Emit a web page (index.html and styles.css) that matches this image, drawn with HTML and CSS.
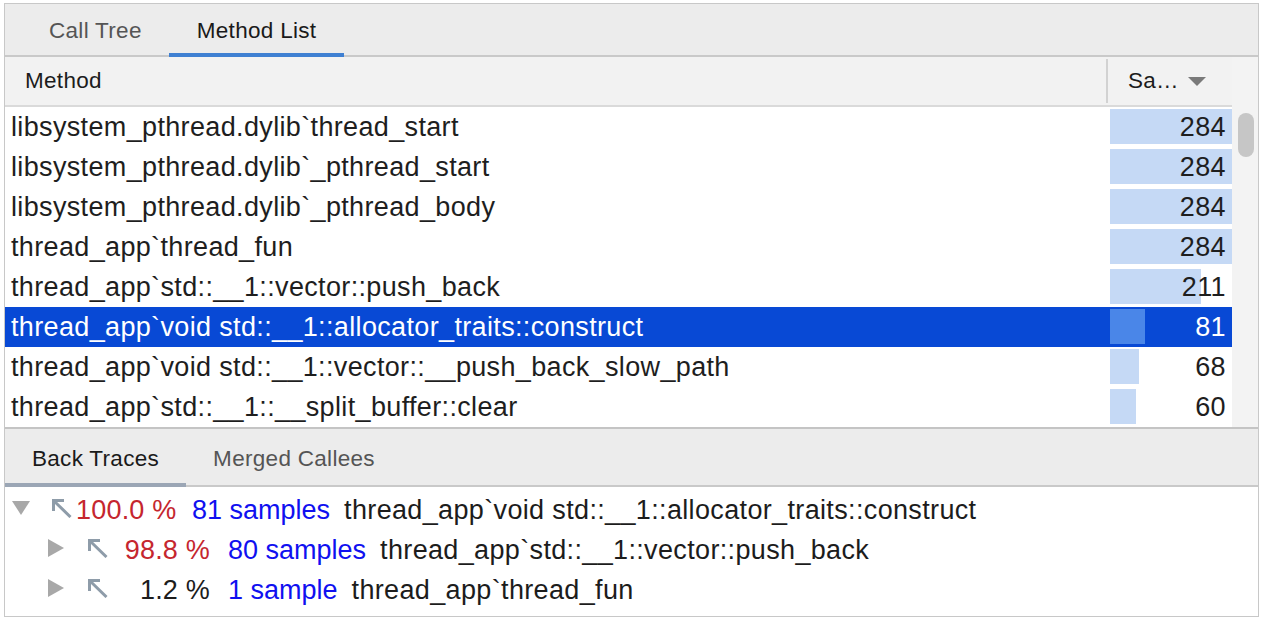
FILE: index.html
```html
<!DOCTYPE html>
<html>
<head>
<meta charset="utf-8">
<title>Method List</title>
<link rel="stylesheet" href="styles.css">
</head>
<body>
<div class="panel">
  <div class="tabs top-tabs">
    <div class="tab">Call Tree</div>
    <div class="tab active">Method List</div>
  </div>
  <div class="main">
    <div class="table">
      <div class="thead">
        <div class="h-method">Method</div>
        <div class="h-div"></div>
        <div class="h-samples"><span>Sa…</span>
          <svg class="sort" width="18" height="9" viewBox="0 0 18 9"><polygon points="0,0 18,0 9,9" fill="#7a7a7a"/></svg>
        </div>
      </div>
      <div class="rows">
        <div class="row"><div class="name">libsystem_pthread.dylib`thread_start</div><div class="cnt"><div class="bar" style="width:100%"></div><span class="num">284</span></div></div>
        <div class="row"><div class="name">libsystem_pthread.dylib`_pthread_start</div><div class="cnt"><div class="bar" style="width:100%"></div><span class="num">284</span></div></div>
        <div class="row"><div class="name">libsystem_pthread.dylib`_pthread_body</div><div class="cnt"><div class="bar" style="width:100%"></div><span class="num">284</span></div></div>
        <div class="row"><div class="name">thread_app`thread_fun</div><div class="cnt"><div class="bar" style="width:100%"></div><span class="num">284</span></div></div>
        <div class="row"><div class="name">thread_app`std::__1::vector::push_back</div><div class="cnt"><div class="bar" style="width:74.3%"></div><span class="num">211</span></div></div>
        <div class="row selected"><div class="name">thread_app`void std::__1::allocator_traits::construct</div><div class="cnt"><div class="bar" style="width:28.5%"></div><span class="num">81</span></div></div>
        <div class="row"><div class="name">thread_app`void std::__1::vector::__push_back_slow_path</div><div class="cnt"><div class="bar" style="width:23.9%"></div><span class="num">68</span></div></div>
        <div class="row"><div class="name">thread_app`std::__1::__split_buffer::clear</div><div class="cnt"><div class="bar" style="width:21.1%"></div><span class="num">60</span></div></div>
      </div>
    </div>
    <div class="scroll"><div class="thumb"></div></div>
  </div>
  <div class="tabs bottom-tabs">
    <div class="tab active">Back Traces</div>
    <div class="tab">Merged Callees</div>
  </div>
  <div class="tree">
    <div class="tr lvl0">
      <div class="toggle"><svg width="18" height="14" viewBox="0 0 18 14"><polygon points="0,0 18,0 9,14" fill="#a8a8a8"/></svg></div>
      <div class="icon"><svg width="20" height="19" viewBox="0 0 20 19"><path d="M1.5 12 V1.5 H12 M1.5 1.5 L18.5 18" fill="none" stroke="#8e9ca9" stroke-width="3"/></svg></div>
      <div class="pct red">100.0 %</div>
      <div class="smp">81 samples</div>
      <div class="mth">thread_app`void std::__1::allocator_traits::construct</div>
    </div>
    <div class="tr lvl1">
      <div class="toggle"><svg width="16" height="18" viewBox="0 0 16 18"><polygon points="0,0 16,9 0,18" fill="#a8a8a8"/></svg></div>
      <div class="icon"><svg width="20" height="19" viewBox="0 0 20 19"><path d="M1.5 12 V1.5 H12 M1.5 1.5 L18.5 18" fill="none" stroke="#8e9ca9" stroke-width="3"/></svg></div>
      <div class="pct red">98.8 %</div>
      <div class="smp">80 samples</div>
      <div class="mth">thread_app`std::__1::vector::push_back</div>
    </div>
    <div class="tr lvl1">
      <div class="toggle"><svg width="16" height="18" viewBox="0 0 16 18"><polygon points="0,0 16,9 0,18" fill="#a8a8a8"/></svg></div>
      <div class="icon"><svg width="20" height="19" viewBox="0 0 20 19"><path d="M1.5 12 V1.5 H12 M1.5 1.5 L18.5 18" fill="none" stroke="#8e9ca9" stroke-width="3"/></svg></div>
      <div class="pct">1.2 %</div>
      <div class="smp">1 sample</div>
      <div class="mth">thread_app`thread_fun</div>
    </div>
  </div>
</div>
</body>
</html>
```

FILE: styles.css
```css
* { box-sizing: border-box; }
html, body { margin: 0; padding: 0; background: #ffffff; }
body {
  font-family: "Liberation Sans", Arial, sans-serif;
  color: #1c1c1c;
}
.panel {
  margin: 3px 0 0 4px;
  width: 1255px;
  height: 614px;
  border: 1px solid #c8c8c8;
  display: flex;
  flex-direction: column;
  overflow: hidden;
}
.tabs {
  display: flex;
  background: #ececec;
  border-bottom: 2px solid #c9c9c9;
  font-size: 22.5px;
  letter-spacing: 0.3px;
}
.top-tabs { height: 53px; padding-left: 17px; }
.bottom-tabs { height: 58px; }
.tab {
  display: flex;
  align-items: center;
  padding: 0 27px;
  color: #555555;
  margin-bottom: -2px;
  border-bottom: 4px solid transparent;
}
.top-tabs .tab { padding-top: 4px; }
.top-tabs .tab.active { padding: 4px 28px 0 28px; }
.bottom-tabs .tab { padding: 6px 27px 0 27px; }
.tab.active { color: #1a1a1a; }
.top-tabs .tab.active { border-bottom-color: #3f80d2; }
.bottom-tabs .tab.active { border-bottom-color: #9ba6b5; }

.main {
  display: flex;
  height: 372px;
  border-bottom: 2px solid #c4c4c4;
}
.table {
  flex: 1;
  display: flex;
  flex-direction: column;
}
.thead {
  height: 50px;
  display: flex;
  background: #f2f2f2;
  border-bottom: 2px solid #dadada;
  font-size: 22.5px;
  letter-spacing: 0.3px;
}
.h-method {
  flex: 1;
  display: flex;
  align-items: center;
  padding-left: 20px;
}
.h-div {
  width: 2px;
  margin: 2px 0;
  background: #d2d2d2;
}
.h-samples {
  width: 124px;
  display: flex;
  align-items: center;
  padding-left: 20px;
}
.sort { margin-left: auto; margin-right: 26px; margin-top: 1px; }
.rows { height: 320px; }
.row {
  height: 40px;
  display: flex;
  font-size: 27px;
  letter-spacing: 0.35px;
  line-height: 41px;
  color: #1e1e1e;
}
.name {
  flex: 1;
  padding-left: 6px;
  white-space: nowrap;
  overflow: hidden;
}
.cnt {
  width: 122px;
  position: relative;
  text-align: right;
  padding-right: 6px;
  letter-spacing: 0.4px;
}
.bar {
  position: absolute;
  left: 0;
  top: 2px;
  height: 35px;
  background: #c5d9f5;
}
.num { position: relative; }
.row.selected { background: #0849d5; color: #ffffff; }
.row.selected .bar { background: #4a86e8; }

.scroll {
  width: 26px;
  background: #f3f3f3;
  padding: 56px 0 0 6px;
}
.thumb {
  width: 16px;
  height: 44px;
  border-radius: 8px;
  background: #c6c6c6;
}

.tree {
  flex: 1;
  padding-top: 3px;
  font-size: 27px;
  letter-spacing: 0.35px;
}
.tr {
  height: 40px;
  display: flex;
  align-items: center;
  white-space: nowrap;
}
.lvl0 { padding-left: 7px; }
.lvl1 { padding-left: 43px; }
.toggle { width: 40px; display: flex; align-items: center; }
.toggle svg { margin-bottom: 5px; }
.icon { width: 24px; display: flex; align-items: center; }
.icon svg { margin-bottom: 4px; }
.pct { width: 98px; text-align: right; color: #1c1c1c; letter-spacing: 0.2px; }
.pct.red { color: #c5262e; }
.smp { margin-left: 18px; color: #1010f0; letter-spacing: 0; }
.mth { margin-left: 14px; color: #1c1c1c; }
```
